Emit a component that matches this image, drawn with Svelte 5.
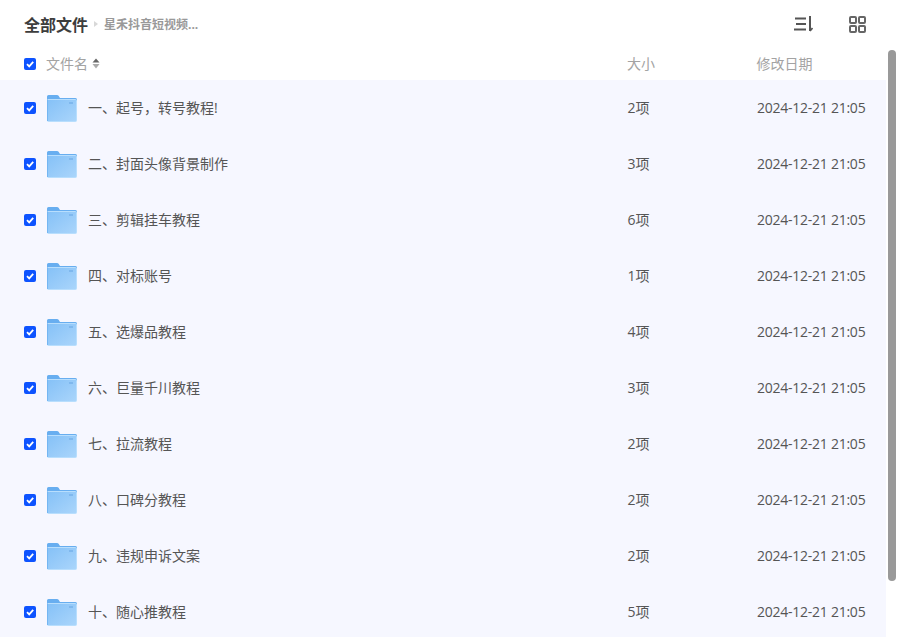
<script lang="ts">
  const rows = [
    { name: "一、起号，转号教程!", size: "2项" },
    { name: "二、封面头像背景制作", size: "3项" },
    { name: "三、剪辑挂车教程", size: "6项" },
    { name: "四、对标账号", size: "1项" },
    { name: "五、选爆品教程", size: "4项" },
    { name: "六、巨量千川教程", size: "3项" },
    { name: "七、拉流教程", size: "2项" },
    { name: "八、口碑分教程", size: "2项" },
    { name: "九、违规申诉文案", size: "2项" },
    { name: "十、随心推教程", size: "5项" },
  ];
  const date = "2024-12-21 21:05";
</script>

{#snippet check()}
  <span class="check">
    <svg width="12" height="12" viewBox="0 0 12 12" fill="none">
      <path d="M3 6.2 5.2 8.4 9.2 3.8" stroke="#fff" stroke-width="1.8" />
    </svg>
  </span>
{/snippet}

<div class="page">
  <header class="top">
    <div class="crumbs">
      <span class="root">全部文件</span>
      <span class="arrow"></span>
      <span class="sub">星禾抖音短视频...</span>
    </div>
    <div class="tools">
      <svg width="19" height="16" viewBox="0 0 19 16" fill="none" stroke="#555" stroke-width="2">
        <path d="M1 2.500H12M2 8H12M0 13.500H12" />
        <path d="M16 0V15" />
        <path d="M16 15 18.500 12" stroke-width="1.600" />
      </svg>
      <svg width="17" height="17" viewBox="0 0 17 17" fill="none" stroke="#666" stroke-width="2">
        <rect x="1" y="1" width="6" height="6" rx="1" />
        <rect x="10" y="1" width="6" height="6" rx="1" />
        <rect x="1" y="10" width="6" height="6" rx="1" />
        <rect x="10" y="10" width="6" height="6" rx="1" />
      </svg>
    </div>
  </header>

  <div class="head line">
    {@render check()}
    <span class="name-col head-name">
      文件名
      <svg width="8" height="11" viewBox="0 0 8 11" fill="#666">
        <path d="M4 0.500 7.500 4.500H0.500Z" />
        <path d="M4 10.500 7.500 6H0.500Z" fill="#aaa" />
      </svg>
    </span>
    <span class="size-col">大小</span>
    <span class="date-col">修改日期</span>
  </div>

  {#each rows as row}
    <div class="row line">
      {@render check()}
      <svg class="folder" width="30" height="27" viewBox="0 0 30 27">
        <defs>
          <linearGradient id="body" x1="0" y1="0" x2="1" y2="1">
            <stop offset="0" stop-color="#85c1f7" />
            <stop offset="1" stop-color="#aad5fb" />
          </linearGradient>
        </defs>
        <path d="M0 1.500A1.500 1.500 0 0 1 1.500 0h8.500a2 2 0 0 1 1.600.800L13 3H28.500A1.500 1.500 0 0 1 30 4.500V8H0Z" fill="#68aef0" />
        <path d="M.5 4.500h28a1 1 0 0 1 1 1v20a1 1 0 0 1-1 1H1.500a1 1 0 0 1-1-1Z" fill="url(#body)" stroke="#b8defd" />
        <path d="M0 4.500h1V26H0Z" fill="#74b6f2" />
        <rect x="22" y="7" width="4" height="2" fill="#7fb8ee" />
      </svg>
      <span class="file-name cell">{row.name}</span>
      <span class="size-col cell">{row.size}</span>
      <span class="date-col cell">{date}</span>
    </div>
  {/each}

  <div class="scrollbar"></div>
</div>

<style>
  :global(body) {
    margin: 0;
    background: #fff;
  }
  .page {
    position: relative;
    width: 898px;
    height: 637px;
    overflow: hidden;
    font-family: "Open Sans", "Noto Sans CJK SC", sans-serif;
    color: #555;
  }
  .top {
    display: flex;
    align-items: center;
    justify-content: space-between;
    height: 48px;
    padding: 0 32px 0 24px;
  }
  .crumbs {
    display: flex;
    align-items: center;
    padding-bottom: 1px;
  }
  .root {
    font-size: 16px;
    font-weight: 700;
    color: #3d3d3d;
  }
  .arrow {
    width: 0;
    height: 0;
    margin: 0 6px;
    border-left: 4px solid #d8d8d8;
    border-top: 3.500px solid transparent;
    border-bottom: 3.500px solid transparent;
  }
  .sub {
    font-size: 12px;
    font-weight: 700;
    color: #999;
  }
  .tools {
    display: flex;
    align-items: center;
    gap: 36px;
  }
  .line {
    display: flex;
    align-items: center;
    width: 886px;
    box-sizing: border-box;
    padding-left: 24px;
  }
  .head {
    height: 32px;
    font-size: 14px;
    color: #a3a3a3;
  }
  .row {
    height: 56px;
    background: #f6f7ff;
    font-size: 14px;
  }
  .cell,
  .head span {
    padding-bottom: 2px;
  }
  .check {
    display: flex;
    align-items: center;
    justify-content: center;
    flex: none;
    width: 12px;
    height: 12px;
    padding: 0 !important;
    border-radius: 2px;
    background: #0d53ff;
  }
  .head-name {
    display: flex;
    align-items: center;
    gap: 4px;
    margin-left: 10px;
    width: 581px;
  }
  .folder {
    flex: none;
    margin: 0 11px;
  }
  .file-name {
    width: 539.500px;
    flex: none;
  }
  .size-col {
    width: 129.500px;
    flex: none;
  }
  .date-col {
    flex: none;
    white-space: nowrap;
  }
  .date-col.cell {
    letter-spacing: -0.25px;
  }
  .scrollbar {
    position: absolute;
    left: 888px;
    top: 50px;
    width: 8px;
    height: 531px;
    border-radius: 4px;
    background: #999;
  }
</style>
